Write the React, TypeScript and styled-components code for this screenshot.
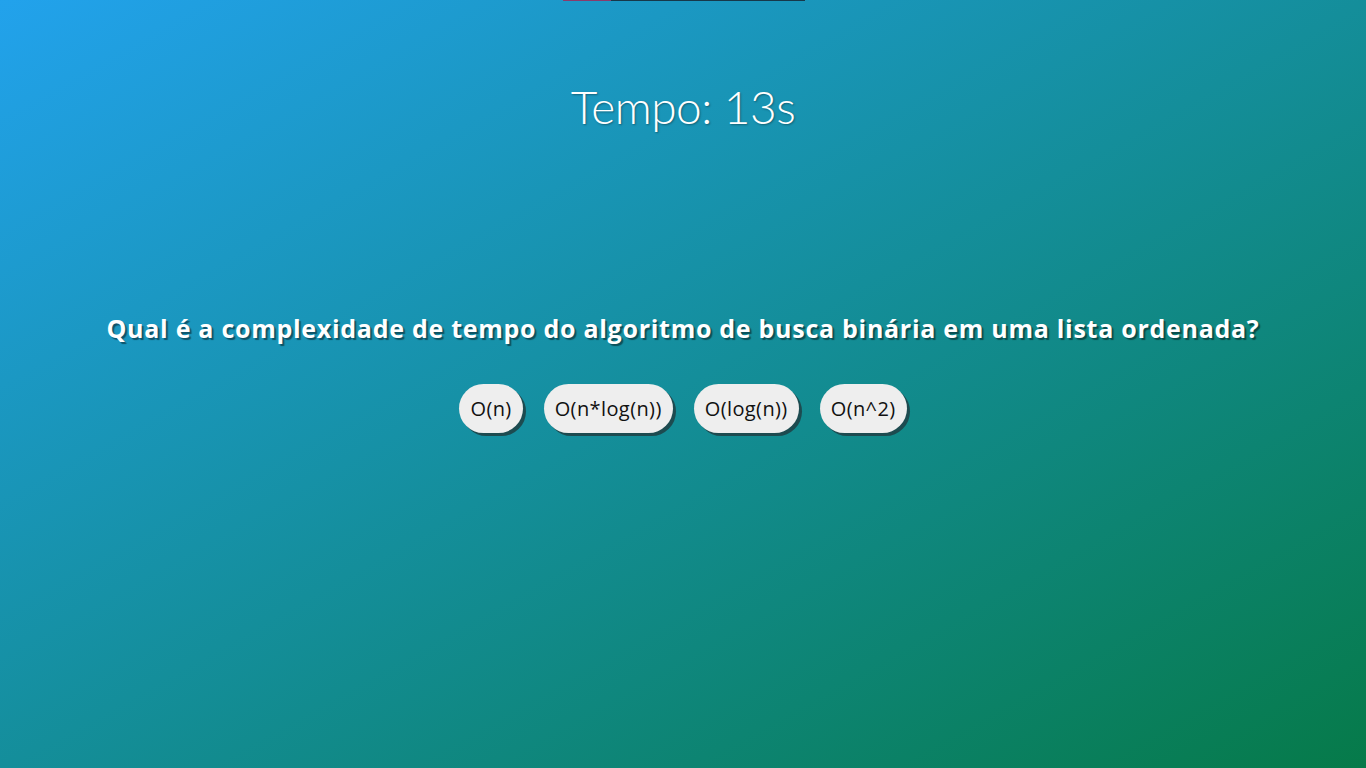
import * as React from 'react'
import styled, { createGlobalStyle } from 'styled-components'

const GlobalStyle = createGlobalStyle`
  html, body {
    margin: 0;
    padding: 0;
  }
  body {
    font-family: 'Lato', 'Open Sans', sans-serif;
  }
`

const Page = styled.div`
  min-height: 100vh;
  box-sizing: border-box;
  background: linear-gradient(to bottom right, #22a2ec, #067a49);
  display: flex;
  flex-direction: column;
  align-items: center;
  color: white;
`

const TimerTrack = styled.div`
  width: 242px;
  height: 1px;
  margin-left: 1px;
  background: #17384a;
  display: flex;
`

const TimerFill = styled.div`
  height: 100%;
  background: #8a3b6b;
`

const Timer = styled.h1`
  margin: 79px 0 0;
  font-size: 46px;
  font-weight: 300;
  line-height: 54px;
  letter-spacing: -0.5px;
  text-shadow: 1px 1px 2px rgba(0, 0, 0, 0.35);
`

const Question = styled.h2`
  margin: 179px 0 0;
  font-family: 'Open Sans', 'Lato', sans-serif;
  font-size: 25px;
  font-weight: 700;
  line-height: 30px;
  letter-spacing: 0.72px;
  text-shadow: 2px 2px 1px rgba(0, 0, 0, 0.45);
`

const Options = styled.div`
  margin-top: 41px;
  display: flex;
  gap: 21px;
`

const Option = styled.button`
  height: 49px;
  padding: 0 11px;
  border: none;
  border-radius: 25px;
  background: #eeeeee;
  color: #111;
  font-family: 'Open Sans', 'Lato', sans-serif;
  font-size: 20px;
  letter-spacing: 0.4px;
  box-shadow: 3px 3px 0 #1d4b50;
  cursor: pointer;
`

const options = ['O(n)', 'O(n*log(n))', 'O(log(n))', 'O(n^2)']

export default function App() {
  const total = 30
  const elapsed = 6
  return (
    <>
      <GlobalStyle />
      <Page>
        <TimerTrack>
          <TimerFill style={{ width: `${(elapsed / total) * 100}%` }} />
        </TimerTrack>
        <Timer>Tempo: 13s</Timer>
        <Question>
          Qual é a complexidade de tempo do algoritmo de busca binária em uma lista ordenada?
        </Question>
        <Options>
          {options.map((o) => (
            <Option key={o}>{o}</Option>
          ))}
        </Options>
      </Page>
    </>
  )
}
